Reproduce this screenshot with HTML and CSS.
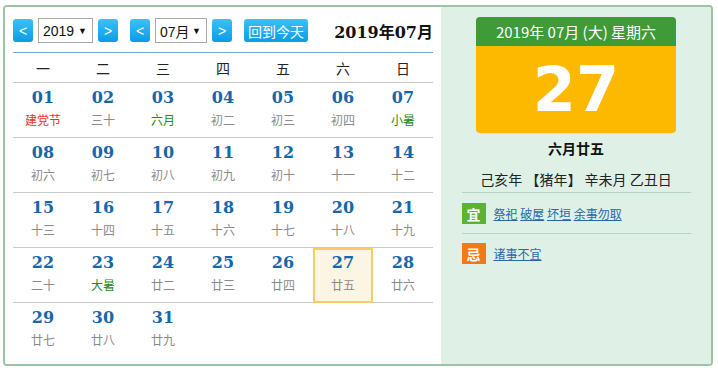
FILE: index.html
```html
<!DOCTYPE html>
<html lang="zh-CN">
<head>
<meta charset="utf-8">
<title>万年历</title>
<link rel="stylesheet" href="styles.css">
</head>
<body>
<div class="cal">
  <div class="left">
    <div class="head">
      <span class="btn">&lt;</span>
      <span class="sel sel-y">2019<i>▼</i></span>
      <span class="btn">&gt;</span>
      <span class="btn btn-gap">&lt;</span>
      <span class="sel sel-m">07月<i>▼</i></span>
      <span class="btn">&gt;</span>
      <span class="today-btn">回到今天</span>
      <span class="title">2019年07月</span>
    </div>
    <div class="week">
      <span>一</span><span>二</span><span>三</span><span>四</span><span>五</span><span>六</span><span>日</span>
    </div>
    <div class="row">
      <div class="cell"><b>01</b><em class="red">建党节</em></div>
      <div class="cell"><b>02</b><em>三十</em></div>
      <div class="cell"><b>03</b><em class="green">六月</em></div>
      <div class="cell"><b>04</b><em>初二</em></div>
      <div class="cell"><b>05</b><em>初三</em></div>
      <div class="cell"><b>06</b><em>初四</em></div>
      <div class="cell"><b>07</b><em class="green">小暑</em></div>
    </div>
    <div class="row">
      <div class="cell"><b>08</b><em>初六</em></div>
      <div class="cell"><b>09</b><em>初七</em></div>
      <div class="cell"><b>10</b><em>初八</em></div>
      <div class="cell"><b>11</b><em>初九</em></div>
      <div class="cell"><b>12</b><em>初十</em></div>
      <div class="cell"><b>13</b><em>十一</em></div>
      <div class="cell"><b>14</b><em>十二</em></div>
    </div>
    <div class="row">
      <div class="cell"><b>15</b><em>十三</em></div>
      <div class="cell"><b>16</b><em>十四</em></div>
      <div class="cell"><b>17</b><em>十五</em></div>
      <div class="cell"><b>18</b><em>十六</em></div>
      <div class="cell"><b>19</b><em>十七</em></div>
      <div class="cell"><b>20</b><em>十八</em></div>
      <div class="cell"><b>21</b><em>十九</em></div>
    </div>
    <div class="row">
      <div class="cell"><b>22</b><em>二十</em></div>
      <div class="cell"><b>23</b><em class="green">大暑</em></div>
      <div class="cell"><b>24</b><em>廿二</em></div>
      <div class="cell"><b>25</b><em>廿三</em></div>
      <div class="cell"><b>26</b><em>廿四</em></div>
      <div class="cell today"><b>27</b><em>廿五</em></div>
      <div class="cell"><b>28</b><em>廿六</em></div>
    </div>
    <div class="row last">
      <div class="cell"><b>29</b><em>廿七</em></div>
      <div class="cell"><b>30</b><em>廿八</em></div>
      <div class="cell"><b>31</b><em>廿九</em></div>
    </div>
  </div>
  <div class="right">
    <div class="card">
      <div class="card-top">2019年 07月 (大) 星期六</div>
      <div class="card-day">27</div>
    </div>
    <div class="lunar">六月廿五</div>
    <div class="gz">己亥年 【猪年】 辛未月 乙丑日</div>
    <div class="yiji">
      <div class="item">
        <span class="badge yi">宜</span>
        <span class="links"><a href="#">祭祀</a> <a href="#">破屋</a> <a href="#">坏垣</a> <a href="#">余事勿取</a></span>
      </div>
      <div class="item">
        <span class="badge ji">忌</span>
        <span class="links"><a href="#">诸事不宜</a></span>
      </div>
    </div>
  </div>
</div>
</body>
</html>
```

FILE: styles.css
```css
html, body {
  margin: 0;
  padding: 0;
  background: #fff;
}

body {
  font-family: "Noto Sans CJK SC", "Liberation Sans", sans-serif;
  color: #222;
}

.cal {
  margin: 5px 0 0 3px;
  width: 710px;
  height: 361px;
  box-sizing: border-box;
  border: 2px solid #9cc4a4;
  border-radius: 4px;
  display: flex;
  overflow: hidden;
}

.left {
  width: 436px;
  padding: 11px 8px 0;
  box-sizing: border-box;
  background: #fff;
}

.head {
  display: flex;
  align-items: center;
  height: 25px;
  padding-bottom: 9px;
  border-bottom: 1px solid #7fa3cf;
}

.btn {
  width: 20px;
  height: 23px;
  border-radius: 3px;
  background: linear-gradient(#3cc0f8, #0b9ce7);
  color: #fff;
  font: 14px "Liberation Sans", sans-serif;
  display: flex;
  align-items: center;
  justify-content: center;
}

.btn-gap {
  margin-left: 12px;
}

.sel {
  height: 25px;
  box-sizing: border-box;
  border: 1px solid #a9a9a9;
  background: #fff;
  margin: 0 5px;
  padding-left: 4px;
  display: flex;
  align-items: center;
  font: 14px "Liberation Sans", "Noto Sans CJK SC", sans-serif;
  color: #111;
}

.sel i {
  font-style: normal;
  font-size: 9px;
  margin-left: auto;
  margin-right: 5px;
}

.sel-y {
  width: 55px;
}

.sel-m {
  width: 52px;
}

.today-btn {
  margin-left: 12px;
  width: 64px;
  height: 23px;
  border-radius: 3px;
  background: linear-gradient(#3cc0f8, #0b9ce7);
  color: #fff;
  font-size: 14px;
  display: flex;
  align-items: center;
  justify-content: center;
}

.title {
  margin-left: auto;
  font: bold 16px "DejaVu Serif", "Noto Sans CJK SC", serif;
  color: #111;
}

.week {
  display: flex;
  height: 29px;
  border-bottom: 1px solid #c8c8c8;
}

.week span {
  width: 60px;
  display: flex;
  align-items: center;
  justify-content: center;
  font-size: 14px;
  color: #222;
}

.row {
  display: flex;
  height: 54px;
  border-bottom: 1px solid #c9c9c9;
}

.row.last {
  border-bottom: none;
}

.cell {
  width: 60px;
  height: 54px;
  box-sizing: border-box;
  padding-top: 5px;
  text-align: center;
}

.cell b {
  display: block;
  font: bold 16px/20px "DejaVu Serif", serif;
  color: #1766aa;
}

.cell em {
  display: block;
  margin-top: 4px;
  font-style: normal;
  font-size: 12px;
  line-height: 16px;
  color: #8a8a8a;
}

.cell em.red {
  color: #e5341c;
}

.cell em.green {
  color: #1d8a24;
}

.cell.today {
  height: 55px;
  border: 2px solid #f6cd62;
  background: #fdf5e3;
  padding-top: 3px;
}

.right {
  flex: 1;
  background: #dff1e6;
  display: flex;
  flex-direction: column;
  align-items: center;
  padding-top: 10px;
}

.card {
  width: 200px;
}

.card-top {
  height: 29px;
  line-height: 29px;
  background: #3f9a38;
  border-radius: 4px 4px 0 0;
  color: #fff;
  font-size: 15px;
  text-align: center;
}

.card-day {
  height: 87px;
  line-height: 87px;
  background: #fdb900;
  border-radius: 0 0 4px 4px;
  color: #fff;
  font: bold 62px/87px "DejaVu Sans", sans-serif;
  text-align: center;
}

.lunar {
  margin-top: 5px;
  line-height: 20px;
  font-size: 14px;
  font-weight: bold;
  color: #111;
}

.gz {
  margin-top: 11px;
  line-height: 20px;
  font-size: 14px;
  color: #222;
}

.yiji {
  width: 229px;
  margin-top: 3px;
}

.item {
  display: flex;
  align-items: center;
  gap: 8px;
  padding: 10px 0 9px;
  border-top: 1px solid #b9d3c2;
}

.item + .item {
  padding-top: 9px;
}

.badge {
  width: 24px;
  height: 21px;
  display: flex;
  align-items: center;
  justify-content: center;
  color: #fff;
  font-size: 14px;
  font-weight: bold;
}

.badge.yi {
  background: #5cb42e;
}

.badge.ji {
  background: #f27a16;
}

.links {
  font-size: 12px;
}

.links a {
  color: #2a66a6;
  text-decoration: underline;
}
```
